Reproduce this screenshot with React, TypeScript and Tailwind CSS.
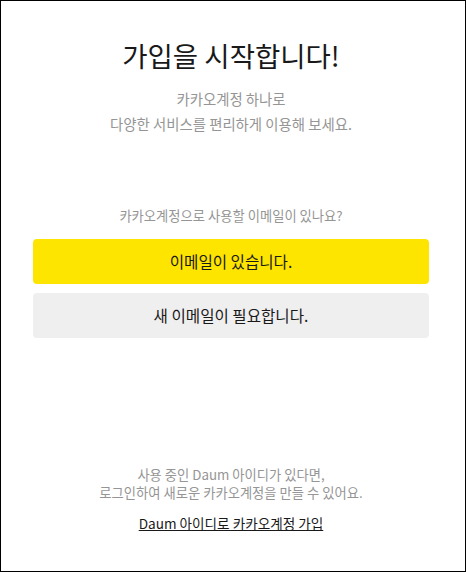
import React from 'react';

export default function App(): JSX.Element {
  const handleHasEmail = () => {
    console.log('has email');
  };
  const handleNewEmail = () => {
    console.log('new email');
  };

  return (
    <div
      className="w-[466px] h-[572px] border border-black bg-white flex flex-col items-center pr-[4px] text-[#191919]"
      style={{ fontFamily: '"Noto Sans CJK KR", "Noto Sans", sans-serif' }}
    >
      {/* Title */}
      <h1 className="mt-[36px] text-[27.5px] leading-[36px] font-normal">가입을 시작합니다!</h1>
      <p className="mt-[13px] text-[14.4px] leading-[25px] text-[#959595] text-center">
        카카오계정 하나로
        <br />
        다양한 서비스를 편리하게 이용해 보세요.
      </p>

      {/* Question + buttons */}
      <p className="mt-[70px] text-[13.3px] leading-[20px] text-[#959595]">
        카카오계정으로 사용할 이메일이 있나요?
      </p>
      <div className="mt-[13px] w-[396px] flex flex-col gap-[9px]">
        <button
          onClick={handleHasEmail}
          className="h-[45px] rounded bg-[#fee500] text-[15.6px] text-[#191919]"
        >
          이메일이 있습니다.
        </button>
        <button
          onClick={handleNewEmail}
          className="h-[45px] rounded bg-[#efefef] text-[15.6px] text-[#191919]"
        >
          새 이메일이 필요합니다.
        </button>
      </div>

      {/* Daum account */}
      <div className="mt-auto pb-[39px] flex flex-col items-center">
        <p className="text-[13.3px] leading-[18px] text-[#959595] text-center">
          사용 중인 Daum 아이디가 있다면,
          <br />
          로그인하여 새로운 카카오계정을 만들 수 있어요.
        </p>
        <a href="#" className="mt-[12px] text-[13.6px] leading-[18px] text-[#191919] underline">
          Daum 아이디로 카카오계정 가입
        </a>
      </div>
    </div>
  );
}
